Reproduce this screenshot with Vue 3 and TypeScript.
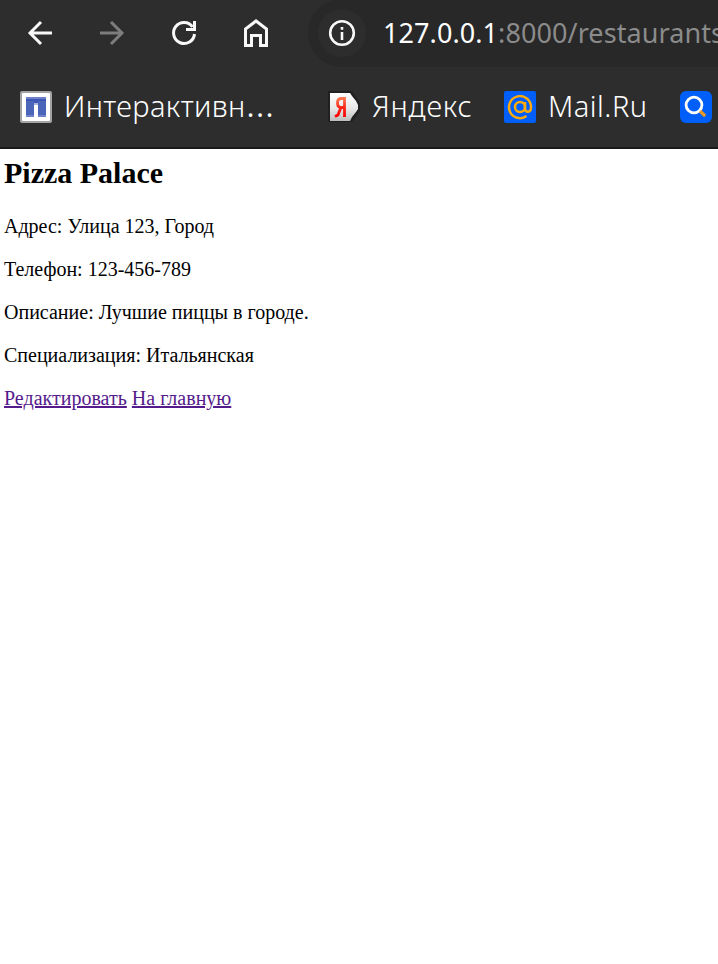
<script setup lang="ts">
const details: { label: string; value: string }[] = [
  { label: 'Адрес', value: 'Улица 123, Город' },
  { label: 'Телефон', value: '123-456-789' },
  { label: 'Описание', value: 'Лучшие пиццы в городе.' },
  { label: 'Специализация', value: 'Итальянская' },
]
</script>

<template>
  <div class="window">
    <header class="chrome">
      <nav class="toolbar">
        <div class="buttons">
          <svg class="nav-icon" viewBox="0 0 32 32"><path d="M28 17H6M17 6 6 17l11 11" /></svg>
          <svg class="nav-icon off" viewBox="0 0 32 32"><path d="M4 17h22M15 6l11 11-11 11" /></svg>
          <svg class="nav-icon" viewBox="0 0 32 32">
            <path d="M26.500 18A10.500 10.500 0 1 1 24.600 10.900" />
            <path class="solid" d="M25 5h3v10H18v-3h7z" />
          </svg>
          <svg class="nav-icon" viewBox="0 0 32 32"><path d="M5.500 29.500V13L16 5l10.500 8v16.500h-6v-10h-9v10z" /></svg>
        </div>
        <div class="omnibox">
          <span class="site-info">
            <svg viewBox="0 0 32 32">
              <circle cx="16" cy="16" r="11.8" />
              <path d="M16 15v8M16 10v2.8" />
            </svg>
          </span>
          <span class="url"><span class="host">127.0.0.1</span><span class="path">:8000/restaurants</span></span>
        </div>
      </nav>
      <nav class="bookmarks">
        <a class="bookmark first">
          <svg viewBox="0 0 32 32">
            <rect width="32" height="32" rx="2" fill="#a3a3a3" />
            <rect x="2" y="2" width="28" height="28" rx="1" fill="#fff" />
            <path d="M6 6h20v20h-8V14h-4v12H6z" fill="#4b65b9" />
            <path d="M6 6h20v2H6zM6 24h8v2H6zM18 24h8v2h-8z" fill="#6f82c9" />
            <path d="M6 8h20v2H6zM14 10h4v2h-4z" fill="#3f57b4" />
            <path d="M14 12h4v2h-4z" fill="#a9b5df" />
          </svg>
          <span class="name interactive">Интерактивн<span class="dots">…</span></span>
        </a>
        <a class="bookmark second">
          <svg viewBox="0 0 32 32">
            <defs>
              <linearGradient id="tag" x1="0" y1="0" x2="0" y2="1">
                <stop offset="0" stop-color="#fff" />
                <stop offset=".55" stop-color="#e8e8e8" />
                <stop offset="1" stop-color="#bdbdbd" />
              </linearGradient>
              <linearGradient id="ya" x1="0" y1="0" x2="0" y2="1">
                <stop offset="0" stop-color="#ff7550" />
                <stop offset=".5" stop-color="#fb2518" />
                <stop offset="1" stop-color="#f00" />
              </linearGradient>
            </defs>
            <path d="M0 0h24l8 12v8l-8 11H0z" fill="#202020" />
            <path d="M2 2h20l2 3 4 5 2 4v4l-2 3-4 5-2 4H2z" fill="url(#tag)" />
            <path d="M16.500 26V7.500h-3.200Q9.500 7.500 9.500 12q0 4.500 4 4.500h3M12.500 17.500 10 24l-3 1.500" fill="none" stroke="url(#ya)" stroke-width="2.8" />
          </svg>
          <span class="name yandex">Яндекс</span>
        </a>
        <a class="bookmark third">
          <svg viewBox="0 0 32 32">
            <rect width="32" height="32" rx="2" fill="#005ff9" />
            <g fill="none" stroke="#ffa90a" stroke-width="2.5">
              <circle cx="16" cy="16" r="5" />
              <path d="M21 11v6.500q0 3.300 3 3.300 3-.2 3-4.800A11 11 0 1 0 22.500 25" />
            </g>
          </svg>
          <span class="name mail">Mail.Ru</span>
        </a>
        <a class="bookmark fourth">
          <svg viewBox="0 0 32 32">
            <rect width="32" height="32" rx="6" fill="#005ff9" />
            <circle cx="14" cy="14" r="7.900" fill="none" stroke="#fff" stroke-width="2.800" />
            <path d="m20 20 5.200 5" stroke="#e79a24" stroke-width="3.200" />
          </svg>
        </a>
      </nav>
    </header>
    <main class="page">
      <h2>Pizza Palace</h2>
      <p v-for="item in details" :key="item.label">{{ item.label }}: {{ item.value }}</p>
      <a class="link" href="#">Редактировать</a>{{ ' ' }}<a class="link" href="#">На главную</a>
    </main>
  </div>
</template>

<style>
body {
  background: #fff;
}
</style>

<style scoped>
.window {
  width: 100%;
  height: 964px;
  overflow: hidden;
  background: #fff;
}
.chrome {
  box-sizing: border-box;
  height: 149px;
  overflow: hidden;
  background: #2d2d2d;
  border-bottom: 2px solid #191919;
  font-family: 'Noto Sans', 'Open Sans', sans-serif;
  font-weight: 300;
  color: #fff;
}
.toolbar {
  display: flex;
  height: 67px;
}
.buttons {
  display: flex;
  align-items: center;
  gap: 40px;
  flex: none;
  width: 284px;
  padding-left: 24px;
  padding-bottom: 3px;
}
.nav-icon {
  flex: none;
  width: 32px;
  height: 32px;
  fill: none;
  stroke: #f8f8f8;
  stroke-width: 3;
}
.nav-icon.off {
  stroke: #7d7d7d;
}
.nav-icon .solid {
  fill: #f8f8f8;
  stroke: none;
}
.omnibox {
  box-sizing: border-box;
  display: flex;
  flex: 1;
  min-width: 0;
  align-items: center;
  height: 68px;
  margin-top: -1px;
  padding-left: 10px;
  overflow: hidden;
  background: #282828;
  border-radius: 34px 0 0 34px;
}
.site-info {
  display: flex;
  flex: none;
  align-items: center;
  justify-content: center;
  width: 48px;
  height: 48px;
  background: #2d2d2d;
  border-radius: 50%;
}
.site-info svg {
  width: 32px;
  height: 32px;
  fill: none;
  stroke: #f8f8f8;
  stroke-width: 2.6;
}
.url {
  padding-left: 17px;
  font-size: 27px;
  font-weight: 400;
  line-height: 40px;
  letter-spacing: 0.08px;
  white-space: nowrap;
}
.host {
  color: #fff;
}
.path {
  color: #8b8b8b;
}
.bookmarks {
  display: flex;
  align-items: center;
  height: 80px;
}
.bookmark {
  display: flex;
  flex: none;
  align-items: center;
  gap: 12px;
}
.bookmark svg {
  flex: none;
  width: 32px;
  height: 32px;
}
.first {
  width: 308px;
  padding-left: 20px;
}
.second {
  width: 176px;
}
.third {
  width: 176px;
}
.first,
.second,
.third {
  box-sizing: border-box;
}
.second {
  margin-left: 20px;
}
.name {
  padding-bottom: 2px;
  font-size: 29px;
  line-height: 40px;
  white-space: nowrap;
}
.interactive {
  letter-spacing: 0.4px;
}
.dots {
  font-size: 39px;
  line-height: 0;
}
.yandex {
  letter-spacing: 0.8px;
}
.mail {
  letter-spacing: 0.5px;
}
.page {
  padding: 6px 4px;
  font: 20px/23px 'Liberation Serif', 'Times New Roman', serif;
  color: #000;
}
h2 {
  margin: 0 0 25px;
  font-size: 30px;
  line-height: 35px;
}
p {
  margin: 0 0 20px;
}
.link {
  color: #551a8b;
  text-decoration: underline;
}
</style>
